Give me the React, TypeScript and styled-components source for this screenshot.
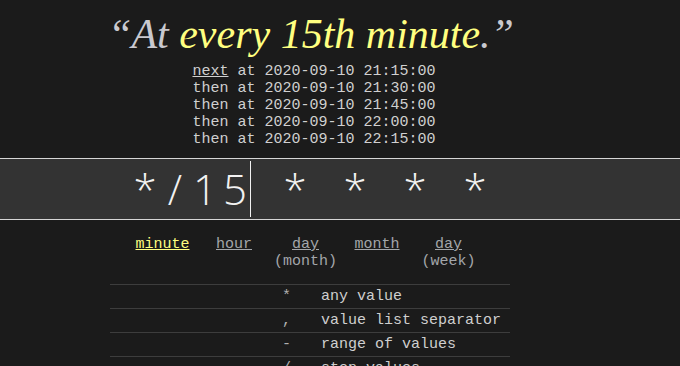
import React from "react";
import styled, {createGlobalStyle} from "styled-components";

const GlobalStyle = createGlobalStyle`
  body {
    margin: 0;
    background: #1b1b1b;
  }
`;

const mono = `"Courier New", "Liberation Mono", monospace`;

const Page = styled.div`
  width: 680px;
  display: flex;
  flex-direction: column;
`;

const Column = styled.div`
  width: 620px;
  display: flex;
  flex-direction: column;
  align-items: center;
`;

const Heading = styled.h1`
  margin: 0 0 0 2px;
  padding-top: 12px;
  font-family: Georgia, "Liberation Serif", serif;
  font-style: italic;
  font-weight: normal;
  font-size: 42px;
  line-height: 44px;
  color: #c9c9cf;
  white-space: nowrap;
`;

const Human = styled.span`
  color: #ffff80;
`;

const NextList = styled.div`
  margin: 7px 0 0 8px;
  font-family: ${mono};
  font-size: 15px;
  line-height: 17px;
  color: #d0d0d0;
  white-space: pre;
`;

const Under = styled.span`
  text-decoration: underline;
`;

const Band = styled.div`
  margin-top: 10px;
  height: 60px;
  border-top: 1px solid #d6d6d6;
  border-bottom: 1px solid #d6d6d6;
  background: #333;
  display: flex;
`;

const CronLine = styled.div`
  width: 620px;
  display: flex;
  justify-content: center;
  align-items: center;
`;

const Char = styled.span`
  width: 30px;
  text-align: center;
  font-family: "Open Sans", "DejaVu Sans", sans-serif;
  font-weight: 300;
  font-size: 42px;
  line-height: 56px;
  color: #f2f2f2;
`;

const Caret = styled.span`
  width: 1px;
  height: 56px;
  margin-right: -1px;
  background: #f2f2f2;
`;

const Tabs = styled.div`
  margin: 17px 9px 0 0;
  display: flex;
  gap: 8.5px;
  font-family: ${mono};
  font-size: 15px;
  line-height: 16.67px;
`;

const Tab = styled.div<{ $active?: boolean }>`
  width: 63px;
  display: flex;
  flex-direction: column;
  align-items: center;
  color: ${p => p.$active ? "#ffff80" : "#a3a6aa"};
`;

const TabName = styled.span`
  text-decoration: underline;
`;

const Table = styled.div`
  margin-top: 14px;
  width: 400px;
  font-family: ${mono};
  font-size: 15px;
`;

const Row = styled.div`
  display: grid;
  grid-template-columns: 191px 1fr;
  border-top: 1px solid #3d3d3d;
  line-height: 23px;
`;

const Symbol = styled.span`
  text-align: right;
  padding-right: 10px;
  color: #b0b0b0;
`;

const Desc = styled.span`
  padding-left: 20px;
  color: #cfcfcf;
`;

const fields = ["*/15", "*", "*", "*", "*"];

const nextRuns = [
    "2020-09-10 21:15:00",
    "2020-09-10 21:30:00",
    "2020-09-10 21:45:00",
    "2020-09-10 22:00:00",
    "2020-09-10 22:15:00",
];

const tabs = [
    {name: "minute", sub: "", active: true},
    {name: "hour", sub: ""},
    {name: "day", sub: "(month)"},
    {name: "month", sub: ""},
    {name: "day", sub: "(week)"},
];

const legend = [
    ["*", "any value"],
    [",", "value list separator"],
    ["-", "range of values"],
    ["/", "step values"],
];

const App = () => {
    return (
        <Page>
            <GlobalStyle/>
            <Column>
                <Heading>
                    “At <Human>every 15th minute</Human>.”
                </Heading>
                <NextList>
                    {nextRuns.map((t, i) => (
                        <div key={t}>
                            {i === 0 ? <Under>next</Under> : "then"} at {t}
                        </div>
                    ))}
                </NextList>
            </Column>
            <Band>
                <CronLine>
                    {fields.map((f, i) => (
                        <React.Fragment key={i}>
                            {i > 0 && <Char>{" "}</Char>}
                            {f.split("").map((c, j) => <Char key={j}>{c}</Char>)}
                            {i === 0 && <Caret/>}
                        </React.Fragment>
                    ))}
                </CronLine>
            </Band>
            <Column>
                <Tabs>
                    {tabs.map((t, i) => (
                        <Tab key={i} $active={t.active}>
                            <TabName>{t.name}</TabName>
                            {t.sub && <span>{t.sub}</span>}
                        </Tab>
                    ))}
                </Tabs>
                <Table>
                    {legend.map(([s, d]) => (
                        <Row key={s}>
                            <Symbol>{s}</Symbol>
                            <Desc>{d}</Desc>
                        </Row>
                    ))}
                </Table>
            </Column>
        </Page>
    );
};

export default App;
